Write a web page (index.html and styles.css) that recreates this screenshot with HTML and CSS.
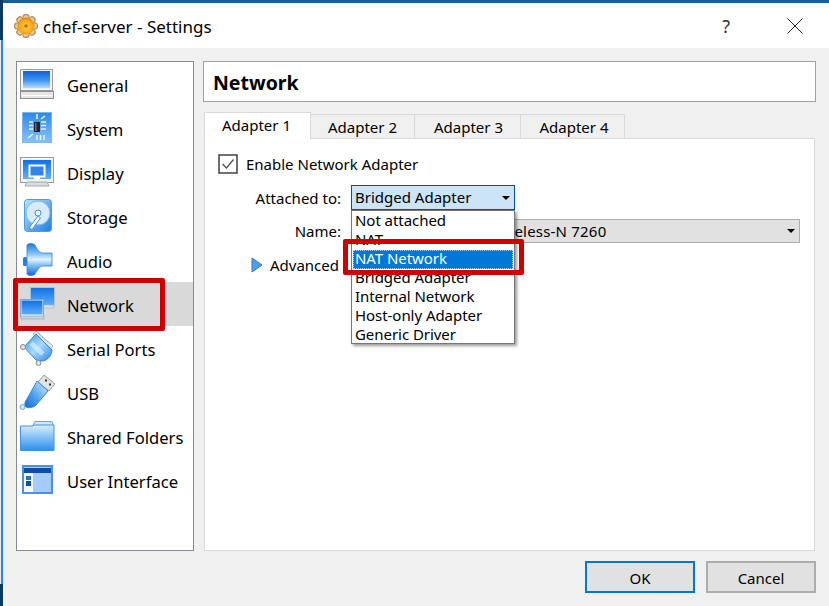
FILE: index.html
```html
<!DOCTYPE html>
<html lang="en">
<head>
<meta charset="utf-8">
<title>chef-server - Settings</title>
<link rel="stylesheet" href="styles.css">
</head>
<body>
<div class="desktop">
  <div class="edge"></div>
  <div class="window">
    <svg width="0" height="0" class="defs">
      <defs>
        <linearGradient id="blueDown" x1="0" y1="0" x2="0" y2="1"><stop offset="0" stop-color="#0c5fdc"/><stop offset=".55" stop-color="#3f95ee"/><stop offset="1" stop-color="#b5dcfb"/></linearGradient>
        <linearGradient id="blueUp" x1="0" y1="0" x2="0" y2="1"><stop offset="0" stop-color="#2f86ea"/><stop offset="1" stop-color="#86c4fa"/></linearGradient>
        <linearGradient id="blueSolid" x1="0" y1="0" x2="0" y2="1"><stop offset="0" stop-color="#0f6fe6"/><stop offset="1" stop-color="#5fb0f6"/></linearGradient>
        <linearGradient id="blueDiag" x1="0" y1="0" x2="1" y2="1"><stop offset="0" stop-color="#bfe3fc"/><stop offset="1" stop-color="#1d7be0"/></linearGradient>
        <linearGradient id="blueHoriz" x1="0" y1="0" x2="0" y2="1"><stop offset="0" stop-color="#1f78dc"/><stop offset=".32" stop-color="#86c4f8"/><stop offset=".5" stop-color="#e3f3fe"/><stop offset=".72" stop-color="#6fb6f4"/><stop offset="1" stop-color="#1668d0"/></linearGradient>
        <linearGradient id="serial" x1="0" y1="0" x2="1" y2="1"><stop offset="0" stop-color="#3a92ea"/><stop offset=".5" stop-color="#a8daf9"/><stop offset="1" stop-color="#2a86e4"/></linearGradient>
        <linearGradient id="usb" x1="1" y1="0" x2="0" y2="1"><stop offset="0" stop-color="#d5eefd"/><stop offset=".6" stop-color="#4a9eef"/><stop offset="1" stop-color="#1668d4"/></linearGradient>
        <linearGradient id="folder" x1="0" y1="0" x2="0" y2="1"><stop offset="0" stop-color="#d9effd"/><stop offset="1" stop-color="#2a8fec"/></linearGradient>
        <radialGradient id="gear" cx=".5" cy=".55" r=".55"><stop offset="0" stop-color="#ffc93f"/><stop offset=".7" stop-color="#f9a81e"/><stop offset="1" stop-color="#d8821a"/></radialGradient>
      </defs>
    </svg>
    <header class="titlebar">
      <svg class="app-icon" viewBox="0 0 24 24" width="24" height="24">
        <g fill="#a98a5e">
          <rect x="8.500" y="0" width="7" height="24" rx="3"/>
          <rect x="8.500" y="0" width="7" height="24" rx="3" transform="rotate(45 12 12)"/>
          <rect x="8.500" y="0" width="7" height="24" rx="3" transform="rotate(90 12 12)"/>
          <rect x="8.500" y="0" width="7" height="24" rx="3" transform="rotate(135 12 12)"/>
        </g>
        <g fill="#f2c98a">
          <rect x="9.500" y="1.200" width="5" height="21.600" rx="2"/>
          <rect x="9.500" y="1.200" width="5" height="21.600" rx="2" transform="rotate(45 12 12)"/>
          <rect x="9.500" y="1.200" width="5" height="21.600" rx="2" transform="rotate(90 12 12)"/>
          <rect x="9.500" y="1.200" width="5" height="21.600" rx="2" transform="rotate(135 12 12)"/>
        </g>
        <circle cx="12" cy="12" r="8.500" fill="url(#gear)"/>
        <circle cx="12" cy="12" r="1.800" fill="#b8741c"/>
      </svg>
      <span class="title-text">chef-server - Settings</span>
      <span class="help">?</span>
      <svg class="close" viewBox="0 0 16 16" width="16" height="16"><path d="M.5.5l15 15M15.500.5l-15 15" stroke="#222" stroke-width="1" fill="none"/></svg>
    </header>
    <div class="content">
      <nav class="sidebar">
        <div class="item">
          <svg class="icon" viewBox="0 0 36 36"><rect x="1.500" y="3.500" width="32" height="21" fill="#f2f2f2" stroke="#9a9a9a"/><rect x="4" y="5" width="27" height="17" fill="url(#blueDown)"/><rect x="1.500" y="25.500" width="33" height="7" fill="#e6e6e6" stroke="#8f8f8f"/><rect x="3" y="29" width="30" height="1" fill="#fff"/></svg>
          <span>General</span>
        </div>
        <div class="item">
          <svg class="icon" viewBox="0 0 36 36"><rect x="3.500" y="2.500" width="29" height="30" fill="url(#blueUp)" stroke="#7fb4ea"/><rect x="15" y="12" width="6" height="10" fill="#1c2530"/><rect x="16" y="13" width="1.500" height="8" fill="#66727e"/><g stroke="#e8f4ff" stroke-width="1.500" fill="none"><path d="M18 4v5M26 6l-4 3M10 12h4M10 15.500h4M10 19h4M22 12h5M22 15.500h5M22 19h5M9 28l5-4M18 25v5M21.500 25v5M25 25v5"/></g></svg>
          <span>System</span>
        </div>
        <div class="item">
          <svg class="icon" viewBox="0 0 36 36"><rect x="1.500" y="3.500" width="33" height="25" fill="#f4f4f4" stroke="#9a9a9a"/><rect x="4" y="6" width="28" height="19" fill="url(#blueSolid)"/><rect x="10.500" y="11.500" width="15" height="11" fill="#2f86ea" stroke="#fff" stroke-width="2"/><rect x="15" y="23" width="6" height="2" fill="#fff"/><path d="M8 28h20l2 4H6z" fill="#dcdcdc" stroke="#a8a8a8"/></svg>
          <span>Display</span>
        </div>
        <div class="item">
          <svg class="icon" viewBox="0 0 36 36"><rect x="5.500" y="1.500" width="27" height="32" rx="3" fill="url(#blueDiag)" stroke="#4a9cec"/><circle cx="19" cy="15" r="12" fill="#d6ecfc" stroke="#7cb8ea"/><circle cx="19" cy="15" r="3" fill="#fff" stroke="#3f8fdc"/><path d="M10 30l9-12 2.500 2L13 31.500z" fill="#fff" stroke="#3f8fdc"/></svg>
          <span>Storage</span>
        </div>
        <div class="item">
          <svg class="icon" viewBox="0 0 36 36"><rect x="4" y="15" width="4" height="9" rx="1.500" fill="#2a80e0"/><path d="M8 3C9 1 14 1 16 3C18 7 20 11 24 11H33V24H24C20 24 18 29 16 32C14 34 9 34 8 32Z" fill="url(#blueHoriz)" stroke="#2f80dc" stroke-width=".8"/></svg>
          <span>Audio</span>
        </div>
        <div class="item selected">
          <svg class="icon" viewBox="0 0 36 36"><rect x="11.500" y="1.500" width="24" height="18" fill="url(#blueSolid)" stroke="#a9c3dc"/><rect x="15" y="19" width="20" height="3" fill="#dadfe4" stroke="#9bb0c4" stroke-width=".6"/><rect x="1.500" y="13.500" width="23" height="17" fill="#f0f0f0" stroke="#7ea4c6"/><rect x="2.500" y="14.500" width="21" height="14" fill="url(#blueSolid)"/><rect x="2" y="30" width="23" height="3" fill="#c3d3e2" stroke="#87a6c2" stroke-width=".6"/></svg>
          <span>Network</span>
        </div>
        <div class="item">
          <svg class="icon" viewBox="0 0 36 36"><path d="M17 1l17 15-3 4L14 4z" fill="#dfe8ef" stroke="#a8b4be"/><path d="M20 4l10 9M18 6l10 9" stroke="#9ab4ca" stroke-dasharray="2 1.500"/><path d="M5 17L17 4l16 16c0 5-4 10-9 11l-7-1z" fill="url(#serial)" stroke="#2f86dc"/><path d="M12 13l12 11" stroke="#dff3fe" stroke-width="5" opacity=".6"/><circle cx="4" cy="17" r="2.500" fill="#e4e4e4" stroke="#8a8a8a"/><circle cx="19.500" cy="33" r="2.500" fill="#e4e4e4" stroke="#8a8a8a"/></svg>
          <span>Serial Ports</span>
        </div>
        <div class="item">
          <svg class="icon" viewBox="0 0 36 36"><path d="M25 1l11 9-6 7-11-9z" fill="#e2e2e2" stroke="#9a9a9a"/><rect x="26" y="5.500" width="2" height="2" fill="#333"/><rect x="30" y="9.500" width="2" height="2" fill="#333"/><path d="M18 7l11 10-12 14c-3 3-8 3-10 2-2-2-1-6 1-8z" fill="url(#usb)" stroke="#2f86ea"/><circle cx="3.500" cy="33" r="2.500" fill="#cfe6fa" stroke="#7a9fc0"/></svg>
          <span>USB</span>
        </div>
        <div class="item">
          <svg class="icon" viewBox="0 0 36 36"><path d="M14 7l2-3.500h17l1 3V10H14z" fill="#cfe9fc" stroke="#5aa7ee"/><path d="M1.500 8h12l2-1H35v25.500H1.500z" fill="url(#folder)" stroke="#3f93e4"/></svg>
          <span>Shared Folders</span>
        </div>
        <div class="item">
          <svg class="icon" viewBox="0 0 36 36"><rect x="3" y="3" width="31" height="29" fill="#4a90e4"/><rect x="5" y="5" width="27" height="25" fill="#a5cbfc"/><rect x="5" y="6" width="27" height="5" fill="#0a4fb0"/><rect x="5" y="11" width="9" height="19" fill="#f4f8ff"/><rect x="7" y="14" width="5" height="4" fill="#2a6fc8"/><rect x="7" y="19" width="5" height="5" fill="#0a4fb0"/></svg>
          <span>User Interface</span>
        </div>
        <div class="mark mark-network"></div>
      </nav>
      <main class="main">
        <div class="page-head">Network</div>
        <div class="tabs">
          <div class="tab active">Adapter 1</div>
          <div class="tab">Adapter 2</div>
          <div class="tab">Adapter 3</div>
          <div class="tab">Adapter 4</div>
        </div>
        <section class="pane">
          <div class="check-row">
            <svg class="checkbox" viewBox="0 0 20 20" width="20" height="20"><rect x="1" y="1" width="18" height="18" fill="#fff" stroke="#333" stroke-width="1.400"/><path d="M4.500 10l4 4 7-8.500" fill="none" stroke="#555" stroke-width="1.400"/></svg>
            <span>Enable Network Adapter</span>
          </div>
          <div class="form">
            <label class="field-label">Attached to:</label>
            <div class="combo-wrap">
              <div class="combo open"><span>Bridged Adapter</span><i class="caret"></i></div>
              <div class="dropdown">
                <div class="option">Not attached</div>
                <div class="option">NAT</div>
                <div class="option current">NAT Network</div>
                <div class="option">Bridged Adapter</div>
                <div class="option">Internal Network</div>
                <div class="option">Host-only Adapter</div>
                <div class="option">Generic Driver</div>
                <div class="mark mark-option"></div>
              </div>
            </div>
            <label class="field-label">Name:</label>
            <div class="combo wide"><span>Intel(R) Dual Band Wireless-N 7260</span><i class="caret"></i></div>
          </div>
          <div class="advanced">
            <svg viewBox="0 0 12 16" width="12" height="16"><path d="M1 1l10 7-10 7z" fill="#4f9fe8" stroke="#2f78c8"/></svg>
            <span>Advanced</span>
          </div>
        </section>
      </main>
    </div>
    <footer class="footer">
      <button class="btn default">OK</button>
      <button class="btn">Cancel</button>
    </footer>
  </div>
</div>
</body>
</html>
```
FILE: styles.css
```css
* { box-sizing: border-box; }
html, body { margin: 0; padding: 0; }
body {
  width: 829px;
  height: 606px;
  overflow: hidden;
  font-family: "Noto Sans", "Open Sans", sans-serif;
  font-size: 15px;
  color: #000;
  background: #fff;
}
.defs { position: absolute; }
.desktop { display: flex; height: 606px; }
.edge {
  width: 3px;
  flex: none;
  background:
    linear-gradient(to right, #e8e8e8 0 1px, #1c8ce6 1px 3px);
  border-top: 40px solid #0d3a63;
  border-bottom: 22px solid #0d3a63;
}
.window {
  flex: 1;
  display: flex;
  flex-direction: column;
  background: #f0f0f0;
  border-top: 3px solid #14609f;
  min-width: 0;
}
.titlebar {
  height: 45px;
  flex: none;
  background: #fff;
  display: flex;
  align-items: center;
  padding: 0 26px 0 11px;
}
.app-icon { margin-right: 5px; flex: none; }
.title-text { font-size: 17px; flex: 1; padding-top: 1px; }
.help { font-size: 18px; color: #333; margin-right: 57px; }
.close { flex: none; }
.content {
  display: flex;
  gap: 9px;
  padding: 13px 13px 0;
  height: 503px;
  flex: none;
}
.sidebar {
  position: relative;
  width: 178px;
  flex: none;
  background: #fff;
  border: 1px solid #8a8a94;
}
.item {
  display: flex;
  align-items: center;
  height: 44px;
  padding-left: 2px;
  font-size: 16.600px;
}
.item span { padding-top: 3px; }
.item.selected { background: #d9d9d9; }
.icon { width: 36px; height: 36px; flex: none; margin-right: 12px; }
.mark {
  position: absolute;
  border: 5px solid #cf0000;
  border-radius: 2px;
  pointer-events: none;
}
.mark-network { left: -4px; top: 216px; width: 152px; height: 53px; }
.main { flex: 1; display: flex; flex-direction: column; min-width: 0; }
.page-head {
  height: 41px;
  flex: none;
  background: #fff;
  border: 1px solid #a0a0a0;
  padding-left: 9px;
  font-weight: 700;
  font-size: 19.500px;
  line-height: 41px;
}
.tabs {
  display: flex;
  align-items: flex-end;
  height: 27px;
  margin: 10px 1px -1px;
  position: relative;
  z-index: 1;
  flex: none;
}
.tab {
  width: 104px;
  height: 25px;
  background: #f0f0f0;
  border: 1px solid #d9d9d9;
  border-left: 0;
  text-align: center;
  line-height: 24px;
}
.tab:nth-child(3) { width: 106px; padding-left: 2px; }
.tab:nth-child(4) { padding-left: 3px; }
.tab.active {
  width: 107px;
  height: 27px;
  background: #fff;
  border-left: 1px solid #d9d9d9;
  border-bottom: 0;
  line-height: 24px;
  padding-right: 2px;
}
.pane {
  flex: 1;
  margin: 0 1px;
  background: #fff;
  border: 1px solid #d9d9d9;
  padding-top: 15px;
}
.check-row {
  display: flex;
  align-items: center;
  height: 20px;
  padding-left: 13px;
  gap: 8px;
}
.checkbox { flex: none; }
.form {
  display: grid;
  grid-template-columns: 136px 164px;
  column-gap: 10px;
  row-gap: 9px;
  margin-top: 11px;
  align-items: center;
}
.field-label { text-align: right; }
.combo-wrap { position: relative; z-index: 2; width: 164px; }
.combo {
  height: 25px;
  background: #e1e1e1;
  border: 1px solid #adadad;
  display: flex;
  align-items: center;
  justify-content: space-between;
  padding: 0 4px 0 3px;
  white-space: nowrap;
}
.combo.open { background: #cce4f7; border-color: #005499; }
.combo.open span { padding-bottom: 1px; }
.combo.wide { width: 449px; height: 24px; letter-spacing: .2px; }
.caret {
  width: 0;
  height: 0;
  border: 4px solid transparent;
  border-top: 4px solid #000;
  border-bottom: 0;
  flex: none;
}
.dropdown {
  position: absolute;
  left: 0;
  top: 25px;
  width: 164px;
  height: 134px;
  padding: 1px;
  background: #fff;
  border: 1px solid #767676;
  box-shadow: 2px 2px 3px rgba(0,0,0,.4);
}
.option {
  height: 19px;
  line-height: 16px;
  padding-left: 2px;
  white-space: nowrap;
  letter-spacing: -.05px;
}
.option.current {
  background: #0078d7;
  color: #fff;
  outline: 1px dotted #9fd0f5;
  outline-offset: -1px;
}
.mark-option { left: -9px; top: 28px; width: 181px; height: 36px; }
.advanced {
  display: flex;
  align-items: center;
  gap: 7px;
  margin-top: 13px;
  padding-left: 46px;
  height: 18px;
}
.footer {
  display: flex;
  justify-content: flex-end;
  gap: 11px;
  padding: 10px 13px 0;
}
.btn {
  width: 110px;
  height: 32px;
  background: #e1e1e1;
  border: 2px solid #adadad;
  font: inherit;
  padding: 1px 0 0;
  color: #000;
}
.btn.default { border-color: #0078d7; }
```
